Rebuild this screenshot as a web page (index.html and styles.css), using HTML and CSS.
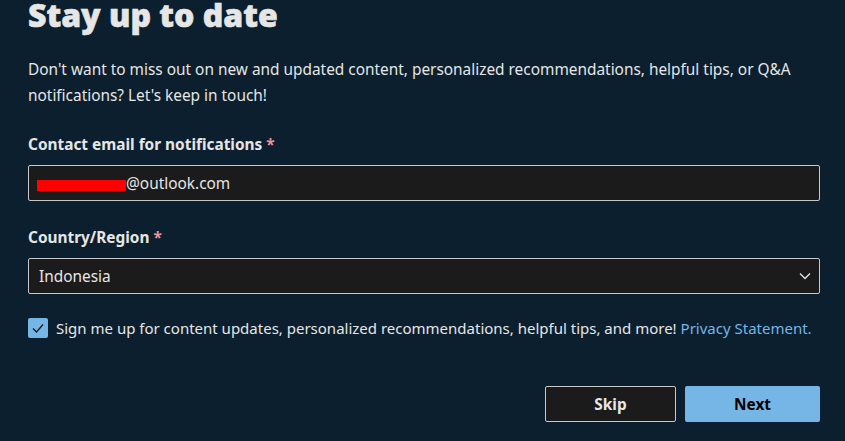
FILE: index.html
```
<!DOCTYPE html>
<html>
<head>
<meta charset="utf-8">
<link rel="stylesheet" href="styles.css">
</head>
<body>
<main class="page">
  <h1 class="title">Stay up to date</h1>
  <p class="intro">Don't want to miss out on new and updated content, personalized recommendations, helpful tips, or Q&amp;A notifications? Let's keep in touch!</p>
  <div class="field">
    <label class="label">Contact email for notifications <span class="req">*</span></label>
    <div class="input"><span class="redact"></span><span>@outlook.com</span></div>
  </div>
  <div class="field">
    <label class="label">Country/Region <span class="req">*</span></label>
    <div class="input select"><span>Indonesia</span>
      <svg class="chev" width="12" height="8" viewBox="0 0 12 8"><path d="M1 1.5 L6 6.5 L11 1.5" fill="none" stroke="#e6e6e6" stroke-width="1.3"/></svg>
    </div>
  </div>
  <div class="check-row">
    <span class="checkbox"><svg width="14" height="12" viewBox="0 0 14 12"><path d="M2 6.5 L5.5 10 L12 2.5" fill="none" stroke="#1b1b1b" stroke-width="1.3"/></svg></span>
    <span class="check-text">Sign me up for content updates, personalized recommendations, helpful tips, and more! <a class="link">Privacy Statement.</a></span>
  </div>
  <div class="actions">
    <button class="btn skip">Skip</button>
    <button class="btn next">Next</button>
  </div>
</main>
</body>
</html>
```
FILE: styles.css
```
html, body { margin: 0; padding: 0; }
body {
  background: #0b1f2e;
  color: #e6e6e6;
  font-family: "Noto Sans", "Open Sans", sans-serif;
  width: 845px;
  height: 441px;
  overflow: hidden;
}
.page {
  padding: 0 25px 0 28px;
}
.title {
  margin: 0;
  padding-top: 1px;
  font-size: 32px;
  font-weight: 900;
  line-height: 28px;
  color: #e6e6e6;
  -webkit-text-stroke: 0.6px #e6e6e6;
}
.intro {
  margin: 28px 0 0 0;
  font-size: 15.4px;
  line-height: 26px;
}
.field { margin-top: 26px; }
.field + .field { margin-top: 27px; }
.label {
  display: block;
  font-weight: 700;
  font-size: 15.4px;
  line-height: 20px;
  margin-bottom: 10px;
}
.req { color: #f1939b; }
.input {
  box-sizing: border-box;
  height: 36px;
  background: #1b1b1b;
  border: 1px solid #c8c8c8;
  border-radius: 2px;
  display: flex;
  align-items: center;
  padding: 0 8px;
  font-size: 15.4px;
}
.redact {
  display: inline-block;
  width: 89px;
  height: 11px;
  background: #ff0000;
  margin-top: 4px;
}
.select { justify-content: space-between; padding-left: 10px; padding-right: 8px; }
.chev { display: block; }
.check-row {
  display: flex;
  align-items: center;
  margin-top: 24px;
  font-size: 15px;
  line-height: 20px;
}
.checkbox {
  width: 20px;
  height: 20px;
  border-radius: 2px;
  background: #75b6e7;
  display: flex;
  align-items: center;
  justify-content: center;
  margin-right: 8px;
  flex: none;
}
.link { color: #75b6e7; }
.actions {
  display: flex;
  justify-content: flex-end;
  gap: 9px;
  margin-top: 48px;
}
.btn {
  box-sizing: border-box;
  height: 36px;
  border-radius: 2px;
  font-family: "Noto Sans", "Open Sans", sans-serif;
  font-weight: 700;
  font-size: 15.4px;
  cursor: pointer;
}
.skip {
  width: 131px;
  background: #1b1b1b;
  color: #e6e6e6;
  border: 1px solid #c8c8c8;
}
.next {
  width: 135px;
  background: #75b6e7;
  color: #000;
  border: none;
}
```
